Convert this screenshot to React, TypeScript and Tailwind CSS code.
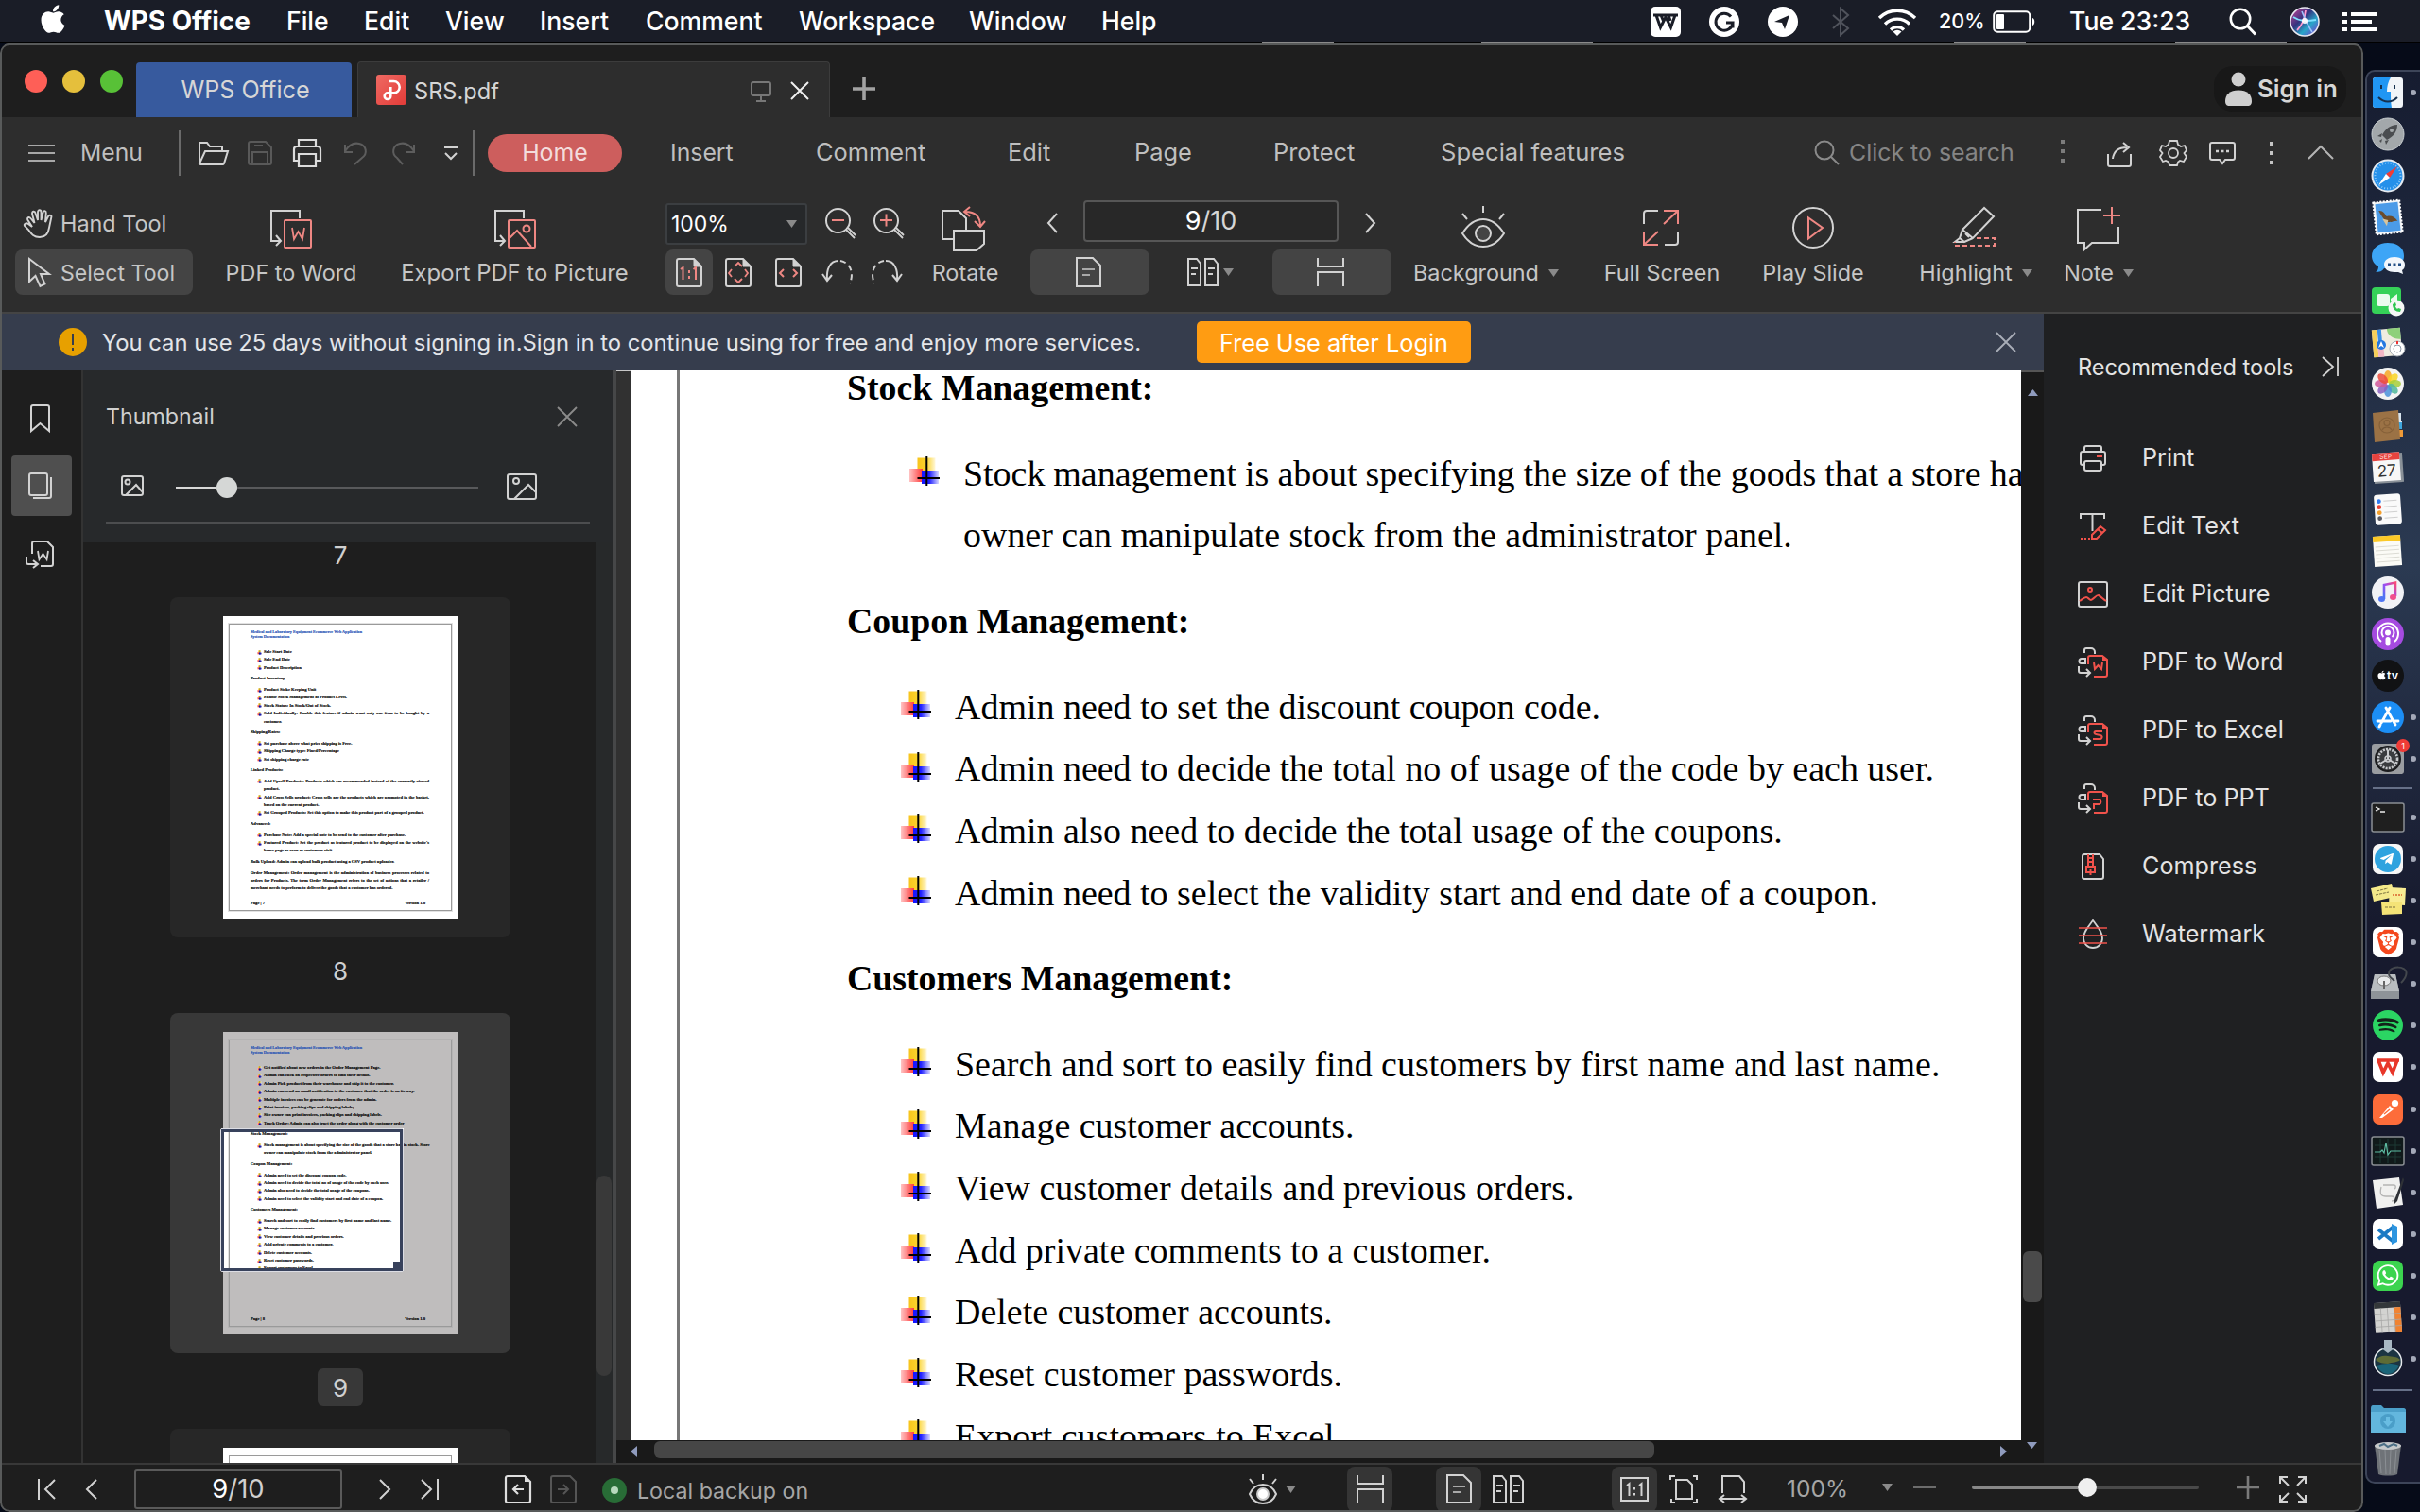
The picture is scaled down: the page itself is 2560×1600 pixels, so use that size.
import type { ReactNode } from "react";
import { FaApple, FaSpotify, FaWhatsapp, FaTelegramPlane } from "react-icons/fa";
import { SiBrave } from "react-icons/si";

type IconProps = { w: number; h: number; children: ReactNode; c?: string; sw?: number };

const LIGHT = "#d2d2d2";
const RED = "#ee8783";
const HOT = "#f0524b";

function Svg({ w, h, children, c = "", sw = 2 }: IconProps) {
  return (
    <svg
      width={w}
      height={h}
      viewBox={`0 0 ${w} ${h}`}
      fill="none"
      stroke={LIGHT}
      strokeWidth={sw}
      className={`block shrink-0 overflow-visible ${c}`}
    >
      {children}
    </svg>
  );
}

function Tri({ c = "" }: { c?: string }) {
  return (
    <Svg w={11} h={8} c={c}>
      <path d="M0 0h11L5.500 8z" fill="#8a8a8a" stroke="none" />
    </Svg>
  );
}

/* ---------- macOS menu bar ---------- */

function MenuBar() {
  return (
    <div className="flex h-11 items-center bg-[#1a1d27] pt-px pl-[42px] text-[26.6px] font-medium whitespace-nowrap text-white">
      <div className="w-[68px]">
        <FaApple className="-ml-[3px] -mt-[6px] size-[34px]" />
      </div>
      <div className="w-[193px] text-[27.8px] font-bold">WPS Office</div>
      <div className="w-[82px]">File</div>
      <div className="w-[86px]">Edit</div>
      <div className="w-[100px]">View</div>
      <div className="w-[112px]">Insert</div>
      <div className="w-[162px]">Comment</div>
      <div className="w-[180px]">Workspace</div>
      <div className="w-[140px]">Window</div>
      <div className="w-[581px]">Help</div>
      <Svg w={32} h={32}>
        <rect width="32" height="32" rx="5" fill="#fff" stroke="none" />
        <path d="M3 9h26M6 9l4.500 13L16 11l5.500 11L26 9M11 9l2.500 6M19 9l2 6" stroke="#1a1d27" strokeWidth="3" />
      </Svg>
      <Svg w={32} h={32} c="ml-[30px]">
        <circle cx="16" cy="16" r="16" fill="#fff" stroke="none" />
        <path d="M23 10.500A9 9 0 1 0 25 17h-7M25 17v5.500" stroke="#1a1d27" strokeWidth="3" />
      </Svg>
      <Svg w={32} h={32} c="ml-[30px]">
        <circle cx="16" cy="16" r="16" fill="#fff" stroke="none" />
        <path d="M7 16 23 9l-5 15-3-7z" fill="#1a1d27" stroke="none" />
      </Svg>
      <Svg w={18} h={30} c="ml-9">
        <path d="M1 8l16 14-8 7V1l8 7L1 22" stroke="#50535c" />
      </Svg>
      <Svg w={42} h={28} c="ml-[30px]">
        <path d="M2 10a27 27 0 0 1 38 0M8 16.500a18.500 18.500 0 0 1 26 0M14 22.500a10 10 0 0 1 14 0" stroke="#fff" strokeWidth="3.400" />
        <path d="M16.500 24.500a7 7 0 0 1 9 0L21 29z" fill="#fff" stroke="none" />
      </Svg>
      <div className="ml-[23px] w-[57px] text-[21.5px]">20%</div>
      <Svg w={46} h={24}>
        <rect x="1.200" y="1.200" width="38" height="21.600" rx="4" stroke="#fff" />
        <rect x="4" y="4" width="8" height="16" rx="1" fill="#fff" stroke="none" />
        <path d="M42 8c3 1 3 7 0 8z" fill="#fff" stroke="none" />
      </Svg>
      <div className="ml-[35px] w-[169px]">Tue 23:23</div>
      <Svg w={30} h={30}>
        <circle cx="12" cy="12" r="10.200" stroke="#fff" strokeWidth="2.600" />
        <path d="m19 19 9 9.500" stroke="#fff" strokeWidth="3" />
      </Svg>
      <Svg w={32} h={32} c="ml-[34px]">
        <defs>
          <linearGradient id="siri" x1="0" y1="0" x2="1" y2="1">
            <stop offset="0" stopColor="#d8479a" />
            <stop offset=".4" stopColor="#33327e" />
            <stop offset=".65" stopColor="#28a6c9" />
            <stop offset="1" stopColor="#8a2bd0" />
          </linearGradient>
        </defs>
        <circle cx="16" cy="16" r="15" fill="url(#siri)" stroke="#e9e9f2" strokeWidth="1.500" />
        <path d="M4 11c6 4 12 5 24 3" stroke="#7fe0ff" strokeWidth="1.800" />
        <path d="M8 25c4-4 8-12 9-21" stroke="#ff9ad0" strokeWidth="1.800" />
        <path d="M24 27c-4-6-7-12-11-22" stroke="#9fc4ff" strokeWidth="1.600" />
        <circle cx="16" cy="15" r="3" fill="#fff" stroke="none" opacity=".9" />
      </Svg>
      <Svg w={36} h={20} c="ml-6">
        <path d="M0 2h5M9 2h27M0 10h5M9 10h22M0 18h5M9 18h27" stroke="#fff" strokeWidth="4" />
      </Svg>
    </div>
  );
}

/* ---------- Title bar with tabs ---------- */

function TitleBar() {
  return (
    <div className="flex h-[76px] items-end bg-[#1e1e1e] text-[#d6d6d6]">
      <div className="mb-[26px] ml-[26px] flex gap-4">
        <div className="size-6 rounded-full bg-[#fe5f57]" />
        <div className="size-6 rounded-full bg-[#e5bf3c]" />
        <div className="size-6 rounded-full bg-[#58c137]" />
      </div>
      <div className="ml-[14px] flex h-[58px] w-[228px] items-center justify-center rounded-t-[4px] bg-[#375a9e] pt-[2px] pl-[3px] text-[25.2px]">
        WPS Office
      </div>
      <div className="ml-[6px] flex h-[59px] w-[500px] items-center rounded-t-[4px] border border-b-0 border-[#3c3c3c] bg-[#2d2d2d] pl-[19px]">
        <Svg w={32} h={32}>
          <defs>
            <linearGradient id="pdf" x1="0" y1="0" x2="1" y2="1">
              <stop stopColor="#ef6a63" />
              <stop offset="1" stopColor="#e23b38" />
            </linearGradient>
          </defs>
          <rect width="32" height="32" rx="3" fill="url(#pdf)" stroke="none" />
          <path d="M14 7h4.500a6.200 6.200 0 0 1 0 12.400H12a3.300 3.300 0 1 0 3.300 3.300V13" stroke="#fff" strokeWidth="2.600" />
        </Svg>
        <span className="mt-[3px] ml-2 w-[355px] text-[23.6px]">SRS.pdf</span>
        <Svg w={22} h={22} c="ml-px mt-[3px]">
          <rect x="1" y="1" width="20" height="14" rx="2" stroke="#777" />
          <path d="M11 15v6M6 21h10" stroke="#777" />
        </Svg>
        <Svg w={20} h={20} c="ml-5 mt-px">
          <path d="m1 1 18 18M19 1 1 19" stroke="#f0f0f0" />
        </Svg>
      </div>
      <Svg w={24} h={24} c="mb-[18px] ml-6">
        <path d="M12 0v24M0 12h24" stroke="#a2a2a2" strokeWidth="3.600" />
      </Svg>
      <div className="mb-[6px] ml-auto mr-[18px] flex h-12 w-[140px] items-center rounded-[20px] bg-[#181818] pl-3 text-[25.9px] font-semibold whitespace-nowrap">
        <Svg w={28} h={36}>
          <circle cx="14" cy="8" r="7.500" fill="#cfcfcf" stroke="none" />
          <path d="M0 31C0 24 5 19.500 14 19.500S28 24 28 31c0 4-2 5-4 5H4c-2 0-4-1-4-5z" fill="#cfcfcf" stroke="none" />
        </Svg>
        <span className="ml-[6px]">Sign in</span>
      </div>
    </div>
  );
}

/* ---------- Ribbon ---------- */

function RibbonTabs() {
  return (
    <div className="flex h-[75px] items-center pl-[30px] text-[25.4px] whitespace-nowrap text-[#bfbfbf]">
      <Svg w={28} h={20}>
        <path d="M0 2h28M0 10h28M0 18h28" stroke="#a8a8a8" strokeWidth="1.800" />
      </Svg>
      <div className="ml-[27px] w-[104px] text-[24.7px]">Menu</div>
      <div className="h-12 w-[2px] bg-[#6a6a6a]" />
      <Svg w={32} h={26} c="ml-[19px]">
        <path d="M1 24V2h8l3 4h13v5M1 24 7 11h24l-4 13a2 2 0 0 1-2 1H2z" />
      </Svg>
      <Svg w={26} h={26} c="ml-[20px]">
        <path d="M3 1h16l6 6v16a2 2 0 0 1-2 2H3a2 2 0 0 1-2-2V3a2 2 0 0 1 2-2zM5 25V12h16v13M7 5h9" stroke="#595959" />
      </Svg>
      <Svg w={30} h={30} c="ml-[22px]">
        <path d="M6 8V1h18v7M7 23H1V11a3 3 0 0 1 3-3h22a3 3 0 0 1 3 3v12h-6M6 16h18v13H6z" stroke="#dcdcdc" strokeWidth="2.200" />
      </Svg>
      <Svg w={24} h={24} c="ml-[24px]">
        <path d="M1 3v8h8M1 10C6 2 12 1 16 2c8 2 9 11 3 15l-8 7" stroke="#5d5d5d" />
      </Svg>
      <Svg w={24} h={24} c="ml-[27px]">
        <path d="M23 3v8h-8M23 10C18 2 12 1 8 2 0 4-1 13 5 17l6 7" stroke="#5d5d5d" />
      </Svg>
      <Svg w={14} h={14} c="ml-[31px]">
        <path d="M0 1h14M1 7l6 6 6-6" />
      </Svg>
      <div className="ml-[16px] h-12 w-[2px] bg-[#6a6a6a]" />
      <div className="ml-[14px] flex h-10 w-[142px] items-center justify-center rounded-full bg-[#cd5e5d] text-[24.9px] text-[#f3dcdc]">
        Home
      </div>
      <div className="ml-[51px] w-[154px] text-[24.8px]">Insert</div>
      <div className="w-[203px]">Comment</div>
      <div className="w-[134px]">Edit</div>
      <div className="w-[147px]">Page</div>
      <div className="w-[177px]">Protect</div>
      <div className="w-[395px] text-[25.6px]">Special features</div>
      <Svg w={27} h={27}>
        <circle cx="11" cy="11" r="9.500" stroke="#8a8a8a" />
        <path d="m18 18 8 8" stroke="#8a8a8a" />
      </Svg>
      <div className="ml-[10px] w-[224px] text-[24.9px] text-[#858585]">Click to search</div>
      <Svg w={4} h={26} c="-mt-[4px]">
        <path d="M2 1v4M2 11v4M2 21v4" stroke="#7c7c7c" strokeWidth="4" />
      </Svg>
      <Svg w={27} h={26} c="ml-[45px] mt-1">
        <path d="M1 12v11a2 2 0 0 0 2 2h20a2 2 0 0 0 2-2V12M6 17c1-8 6-12 15-12M17 0l6 5-6 5" />
      </Svg>
      <Svg w={28} h={28} c="ml-[29px]">
        <path d="M10 1h8l1 4 3 2 4-1 2 5-2.500 3 2.500 4-3 5-4-1-2 1.500-1 3.500h-8l-1-3.500L6 22l-3 1-3-5 2.500-4L0 11l2-5 4 1 3-2z" strokeWidth="1.800" />
        <circle cx="14" cy="14" r="5" strokeWidth="1.800" />
      </Svg>
      <Svg w={28} h={24} c="ml-6">
        <path d="M3 1h22a2 2 0 0 1 2 2v14a2 2 0 0 1-2 2h-8l-3 4-3-4H3a2 2 0 0 1-2-2V3a2 2 0 0 1 2-2z" />
        <path d="M7 10h3M12.500 10h3M18 10h3" strokeWidth="2.600" />
      </Svg>
      <Svg w={4} h={26} c="ml-9">
        <path d="M2 1v4M2 11v4M2 21v4" stroke="#c4c4c4" strokeWidth="4" />
      </Svg>
      <Svg w={28} h={15} c="ml-9">
        <path d="m1 14 13-13 13 13" stroke="#b4b4b4" />
      </Svg>
    </div>
  );
}

function BigTool({ c, icon, label, tri }: { c: string; icon: ReactNode; label: string; tri?: boolean }) {
  return (
    <div className={`flex flex-col items-center whitespace-nowrap ${c}`}>
      <div className="flex h-[52px] items-center justify-center">{icon}</div>
      <div className="flex h-[50px] items-center">
        {label}
        {tri && <Tri c="ml-[10px] mr-[2px]" />}
      </div>
    </div>
  );
}

function ExportIcon({ children }: { children: ReactNode }) {
  return (
    <Svg w={44} h={41} c="mt-[8px]">
      <path d="M31 9V1H1v32h9M6 27l5 6-5 5" />
      <rect x="15" y="11" width="28" height="29" rx="1" stroke={RED} />
      {children}
    </Svg>
  );
}

function SinglePage({ h = 32 }: { h?: number }) {
  return (
    <Svg w={27} h={h}>
      <path d={`M1 1h17l8 8v${h - 10}H1z`} />
      <path d="M7 13h13M7 19h8" stroke="#a9a9a9" />
    </Svg>
  );
}

function DoublePage() {
  return (
    <Svg w={33} h={30}>
      <path d="M1 1h9l4 5v23H1zM19 1h9l4 5v23H19z" />
      <path d="M4 11h7M4 17h5M22 11h7M22 17h5" strokeWidth="1.800" />
    </Svg>
  );
}

function Continuous() {
  return (
    <Svg w={29} h={30}>
      <path d="M1 0v9h27V0M1 30V15h27v15" />
    </Svg>
  );
}

function PageShape({ children }: { children: ReactNode }) {
  return (
    <Svg w={28} h={31}>
      <path d="M3 1h16l8 8v19a2 2 0 0 1-2 2H3a2 2 0 0 1-2-2V3a2 2 0 0 1 2-2z" />
      <path d="m19 1 8 8h-8z" fill={LIGHT} strokeWidth="1" />
      {children}
    </Svg>
  );
}

function Ribbon() {
  return (
    <div className="flex h-[131px] pt-[13px] text-[23.4px] text-[#c6c6c6]">
      <div className="ml-4 flex w-[188px] flex-col gap-1 whitespace-nowrap">
        <div className="flex h-12 items-center pl-[9px]">
          <Svg w={32} h={31}>
            <path
              d="M9 19 4.500 12c-1.500-3 1.500-4 3-2l4 5L9 5c0-3 3-3 3.500-.5L15 12V3.500c0-3 3.500-3 3.500 0V12l2-8c.500-3 3.500-2 3.300.5L23 14l3-6c1.300-2.300 4-1 3.300 1L27 20c-1 7-5 10-10 10-7 0-9-4-12-8l-4-4c-1-2.500 2-3.500 4-2z"
              strokeWidth="1.900"
            />
          </Svg>
          <span className="mt-[2px] ml-[7px]">Hand Tool</span>
        </div>
        <div className="flex h-12 items-center rounded-lg bg-[#444] pl-[13px]">
          <Svg w={26} h={32}>
            <path d="M2 2v24l6.500-6 5 11 5-2.500L14 18h9z" />
          </Svg>
          <span className="mt-[2px] ml-[9px] text-[23.1px]">Select Tool</span>
        </div>
      </div>

      <BigTool
        c="ml-[34px] w-[140px]"
        icon={
          <ExportIcon>
            <path d="m23 19 2 12 4.500-8 4.500 8 2-12" stroke={RED} strokeWidth="1.800" />
          </ExportIcon>
        }
        label="PDF to Word"
      />
      <BigTool
        c="ml-[46px] w-[241px] text-[23.8px]"
        icon={
          <ExportIcon>
            <path d="m16 30 8-8 15 17" stroke={RED} />
            <circle cx="34" cy="20" r="3.500" stroke={RED} />
          </ExportIcon>
        }
        label="Export PDF to Picture"
      />

      <div className="ml-[39px] flex w-[262px] flex-col gap-1">
        <div className="flex h-12 items-center">
          <div className="mt-[2px] flex h-11 w-[150px] items-center rounded-[3px] border-2 border-[#3b3e41] bg-[#26282a] pl-1 text-[23px] text-white">
            <span className="w-[122px]">100%</span>
            <Tri />
          </div>
          <Svg w={34} h={33} c="ml-[19px]">
            <circle cx="13.500" cy="13.500" r="12.500" />
            <path d="M7 13h13" stroke={RED} />
            <path d="m22 23 9 9M24 21l8 8" strokeWidth="1.800" />
          </Svg>
          <Svg w={34} h={33} c="ml-[17px]">
            <circle cx="13.500" cy="13.500" r="12.500" />
            <path d="M7 13h13M13.500 6.500v13" stroke={RED} />
            <path d="m22 23 9 9M24 21l8 8" strokeWidth="1.800" />
          </Svg>
        </div>
        <div className="flex h-12 items-center">
          <div className="flex h-12 w-[50px] items-center justify-center rounded-lg bg-[#444]">
            <PageShape>
              <path d="M5 12l2.500-2v13M18.500 12l2.500-2v13M14 13v3M14 19v3" stroke={RED} />
            </PageShape>
          </div>
          <div className="ml-[13px]">
            <PageShape>
              <path d="m10 9 4-4 4 4M10 22l4 4 4-4M7 12l-3 4 3 4M21 12l3 4-3 4" stroke={RED} strokeWidth="1.800" />
            </PageShape>
          </div>
          <div className="ml-[25px]">
            <PageShape>
              <path d="m9 12-4 4 4 4M19 12l4 4-4 4" stroke={RED} />
            </PageShape>
          </div>
          <Svg w={32} h={26} c="ml-[22px]">
            <path d="M5 21C4 10 8 1 17 1M0 15l5 7 5-6" />
            <path d="M19 1c10 2 15 12 10 24" strokeDasharray="6 4" />
          </Svg>
          <Svg w={32} h={26} c="ml-[20px]">
            <path d="M27 21C28 10 24 1 15 1M32 15l-5 7-5-6" />
            <path d="M13 1C3 3-2 13 3 25" strokeDasharray="6 4" />
          </Svg>
        </div>
      </div>

      <BigTool
        c="ml-[18px] w-[74px]"
        icon={
          <Svg w={46} h={47} c="mt-[8px] mr-[4px]">
            <path d="M12 34H1V4h17l8 8v12M13 25h32v14l-8 7H13z" />
            <path d="M30 0l-6 5 6 5M25 5c10 0 16 5 16 15M35 15l6 6 5-6" stroke={RED} />
          </Svg>
        }
        label="Rotate"
      />

      <div className="ml-[32px] flex w-[382px] flex-col gap-1">
        <div className="flex h-12 items-center">
          <Svg w={12} h={20} c="ml-[17px]">
            <path d="m11 0-9 10 9 10" />
          </Svg>
          <div className="-mt-1 ml-[27px] flex h-11 w-[270px] items-center justify-center rounded-[4px] border-2 border-[#565656] bg-[#282828] text-[27px] text-[#d6d6d6]">
            <span className="text-white">9</span>/10
          </div>
          <Svg w={12} h={20} c="ml-[28px]">
            <path d="m1 0 9 10-9 10" />
          </Svg>
        </div>
        <div className="flex h-12 items-center">
          <div className="flex h-12 w-[126px] items-center justify-center rounded-lg bg-[#444] pr-1">
            <SinglePage />
          </div>
          <div className="ml-10">
            <DoublePage />
          </div>
          <Tri c="ml-[5px]" />
          <div className="ml-auto flex h-12 w-[126px] items-center justify-center rounded-lg bg-[#444] pr-1">
            <Continuous />
          </div>
        </div>
      </div>

      <BigTool
        c="ml-[22px] w-[158px]"
        icon={
          <Svg w={46} h={44} c="mt-[4px] mr-2">
            <path d="M1 29C8 18 15 14 23 14s15 4 22 15c-7 11-14 14-22 14S8 40 1 29zM23 0v7M1 8l5 6M45 8l-5 6" />
            <circle cx="23" cy="29" r="8" fill="#444" />
          </Svg>
        }
        label="Background"
        tri
      />
      <BigTool
        c="ml-[44px] w-[124px]"
        icon={
          <Svg w={38} h={38} c="mt-[6px] mr-[2px]">
            <path d="M1 15V4a3 3 0 0 1 3-3h12M37 23v11a3 3 0 0 1-3 3H23" />
            <path d="M22 1h15v14M37 1 22 15M16 37H1V23M1 37l15-14" stroke={RED} />
          </Svg>
        }
        label="Full Screen"
      />
      <BigTool
        c="ml-[44px] w-[108px]"
        icon={
          <Svg w={44} h={44} c="mt-[6px]">
            <circle cx="22" cy="22" r="21" />
            <path d="M17 11.500v22L32 22z" stroke={RED} />
          </Svg>
        }
        label="Play Slide"
      />
      <BigTool
        c="ml-[58px] w-[122px]"
        icon={
          <Svg w={44} h={42} c="mt-[4px] mr-1">
            <path d="M32 1 9 24l11 9L42 10zM9 24l-3 9 5 4 9-4M6 33l-5 4h10M12 28l4 4" />
            <path d="M24 33h19v8H1v-4" stroke={RED} strokeDasharray="5 3" />
          </Svg>
        }
        label="Highlight"
        tri
      />
      <BigTool
        c="ml-[31px] w-[76px]"
        icon={
          <Svg w={46} h={46} c="mt-[8px] mr-[2px]">
            <path d="M26 3H1v35h7v7l8-7h28V21" />
            <path d="M37 0v18M28 9h18" stroke={RED} />
          </Svg>
        }
        label="Note"
        tri
      />
    </div>
  );
}

/* ---------- Document content ---------- */

type Block = { k: "h" | "b" | "s" | "c" | "j" | "bj"; t: string; gap?: boolean };

const doc: Block[] = [
  { k: "h", t: "Stock Management:" },
  { k: "s", t: "Stock management is about specifying the size of the goods that a store has", gap: true },
  { k: "c", t: "owner can manipulate stock from the administrator panel." },
  { k: "h", t: "Coupon Management:", gap: true },
  { k: "b", t: "Admin need to set the discount coupon code.", gap: true },
  { k: "b", t: "Admin need to decide the total no of usage of the code by each user." },
  { k: "b", t: "Admin also need to decide the total usage of the coupons." },
  { k: "b", t: "Admin need to select the validity start and end date of a coupon." },
  { k: "h", t: "Customers Management:", gap: true },
  { k: "b", t: "Search and sort to easily find customers by first name and last name.", gap: true },
  { k: "b", t: "Manage customer accounts." },
  { k: "b", t: "View customer details and previous orders." },
  { k: "b", t: "Add private comments to a customer." },
  { k: "b", t: "Delete customer accounts." },
  { k: "b", t: "Reset customer passwords." },
  { k: "b", t: "Export customers to Excel." },
];

const page7: Block[] = [
  { k: "b", t: "Sale Start Date" },
  { k: "b", t: "Sale End Date" },
  { k: "b", t: "Product Description" },
  { k: "h", t: "Product Inventory", gap: true },
  { k: "b", t: "Product Stoke Keeping Unit", gap: true },
  { k: "b", t: "Enable Stock Management at Product Level." },
  { k: "b", t: "Stock Status: In Stock/Out of Stock." },
  { k: "bj", t: "Sold Individually: Enable this feature if admin want only one item to be bought by a" },
  { k: "c", t: "customer." },
  { k: "h", t: "Shipping Rates:", gap: true },
  { k: "b", t: "Set purchase above what price shipping is Free.", gap: true },
  { k: "b", t: "Shipping Charge type: Fixed/Percentage" },
  { k: "b", t: "Set shipping charge rate" },
  { k: "h", t: "Linked Products:", gap: true },
  { k: "bj", t: "Add Upsell Products: Products which are recommended instead of the currently viewed", gap: true },
  { k: "c", t: "product." },
  { k: "bj", t: "Add Cross Sells product: Cross sells are the products which are promoted in the basket," },
  { k: "c", t: "based on the current product." },
  { k: "b", t: "Set Grouped Products: Set this option to make this product part of a grouped product." },
  { k: "h", t: "Advanced:", gap: true },
  { k: "b", t: "Purchase Note: Add a special note to be send to the customer after purchase.", gap: true },
  { k: "bj", t: "Featured Product: Set the product as featured product to be displayed on the website's" },
  { k: "c", t: "home page as soon as customers visit." },
  { k: "h", t: "Bulk Upload: Admin can upload bulk product using a CSV product uploader.", gap: true },
  { k: "j", t: "Order Management: Order management is the administration of business processes related to", gap: true },
  { k: "j", t: "orders for Products. The term Order Management refers to the set of actions that a retailer /" },
  { k: "h", t: "merchant needs to perform to deliver the goods that a customer has ordered." },
];

const page8: Block[] = [
  { k: "b", t: "Get notified about new orders in the Order Management Page." },
  { k: "b", t: "Admin can click on respective orders to find their details." },
  { k: "b", t: "Admin Pick product from their warehouse and ship it to the customer." },
  { k: "b", t: "Admin can send an email notification to the customer that the order is on its way." },
  { k: "b", t: "Multiple invoices can be generate for orders from the admin." },
  { k: "b", t: "Print invoices, packing slips and shipping labels;" },
  { k: "b", t: "Site owner can print invoices, packing slips and shipping labels." },
  { k: "b", t: "Track Order: Admin can also tract the order along with the customer order" },
  { ...doc[0], gap: true },
  { k: "bj", t: "Stock management is about specifying the size of the goods that a store has in stock. Store", gap: true },
  ...doc.slice(2),
];

function Bullet({ c = "" }: { c?: string }) {
  return (
    <svg viewBox="0 0 32 31" className={`block shrink-0 ${c}`}>
      <defs>
        <linearGradient id="by">
          <stop offset="0" stopColor="#f8c41c" />
          <stop offset=".5" stopColor="#fbd42e" />
          <stop offset="1" stopColor="#fff8dc" />
        </linearGradient>
        <linearGradient id="br" x1="1" x2="0">
          <stop offset="0" stopColor="#ff3b3b" />
          <stop offset="1" stopColor="#ffc4c4" />
        </linearGradient>
        <linearGradient id="bb">
          <stop offset="0" stopColor="#1414ff" />
          <stop offset=".45" stopColor="#2020ff" />
          <stop offset="1" stopColor="#d8d8ff" />
        </linearGradient>
      </defs>
      <rect x="8.500" y="1.500" width="19" height="15" fill="url(#by)" />
      <rect y="13" width="14" height="14" fill="url(#br)" />
      <rect x="13" y="15" width="18" height="14" fill="url(#bb)" />
      <path d="M18.300 0v31M8.500 23H32" stroke="#000" strokeWidth="2" />
    </svg>
  );
}

function DocLine({ b }: { b: Block }) {
  const gap = b.gap ? "mt-[25px]" : "";
  if (b.k === "h") return <div className={`pl-[180px] text-[37.8px] font-bold ${gap}`}>{b.t}</div>;
  if (b.k === "c") return <div className="pl-[303px]">{b.t}</div>;
  return (
    <div
      className={`flex ${b.k === "s" ? "pl-[246px] tracking-[-0.02px] [word-spacing:-0.45px]" : "pl-[237px]"} ${gap}`}
    >
      <Bullet c={`mt-[14.5px] h-[31px] w-8 ${b.k === "s" ? "mr-[25px]" : "mr-[25px]"}`} />
      {b.t}
    </div>
  );
}

function Document() {
  return (
    <div className="flex h-full w-[1470px] bg-white pl-12">
      <div className="h-full w-[3px] shrink-0 bg-[#777]" />
      <div className="-ml-[3px] mt-[-14.1px] min-w-0 flex-1 overflow-hidden font-['Liberation_Serif',serif] text-[37.96px] leading-[65.65px] whitespace-nowrap text-black">
        {doc.map((b) => (
          <DocLine key={b.t} b={b} />
        ))}
      </div>
    </div>
  );
}

function ThumbLine({ b }: { b: Block }) {
  const gap = b.gap ? "mt-[3.2px]" : "";
  if (b.k === "h") return <div className={gap}>{b.t}</div>;
  if (b.k === "j")
    return <div className={`w-[189px] [text-align-last:justify] ${gap}`}>{b.t}</div>;
  if (b.k === "c") return <div className="pl-[14px]">{b.t}</div>;
  return (
    <div className={`flex pl-[7px] ${gap}`}>
      <Bullet c="mt-[1.5px] mr-[2px] size-[5px]" />
      <span className={b.k === "bj" ? "w-[175px] [text-align-last:justify]" : ""}>{b.t}</span>
    </div>
  );
}

function ThumbPage({ lines, footer }: { lines: Block[]; footer: string }) {
  return (
    <div className="relative m-[6px] mt-2 h-[304px] border border-[#9a9a9a] pl-[22px] pt-[5px] font-['Liberation_Serif',serif] text-[4.61px] leading-[8.4px] font-bold whitespace-nowrap text-black outline outline-[#9a9a9a]/30 [-webkit-text-stroke:0.15px_currentColor]">
      <div className="text-[4.19px] leading-[5px] text-[#2450b4]">
        Medical and Laboratory Equipment Ecommerce Web Application
        <br />
        System Documentation
      </div>
      <div className="h-[276px] overflow-visible pt-[10px]">
        {lines.map((b) => (
          <ThumbLine key={b.t} b={b} />
        ))}
      </div>
      <div className="flex justify-between pr-[27px]">
        <span>{footer}</span>
        <span>Version 1.0</span>
      </div>
    </div>
  );
}

/* ---------- Left side ---------- */

function Rail() {
  return (
    <div className="flex w-[88px] shrink-0 flex-col items-center gap-2 border-r-2 border-[#333] bg-[#1e1e1e] pt-[18px] pl-[2px]">
      <div className="flex size-16 items-center justify-center pr-[3px]">
        <Svg w={21} h={29}>
          <path d="M1 28V3a2 2 0 0 1 2-2h15a2 2 0 0 1 2 2v25l-9.500-8z" />
        </Svg>
      </div>
      <div className="flex size-16 items-center justify-center rounded bg-[#4f4f4f] pr-[3px]">
        <Svg w={25} h={28}>
          <rect x="1" y="1" width="19" height="23" rx="2" />
          <path d="M24 5v20a2 2 0 0 1-2 2H5" />
        </Svg>
      </div>
      <div className="flex size-16 items-center justify-center pr-[5px]">
        <Svg w={30} h={29}>
          <path d="M7 14V3a2 2 0 0 1 2-2h14l6 6v18a2 2 0 0 1-2 2H16M1 17v6a2 2 0 0 0 2 2h9M8 21l5 4-5 4" />
          <path d="m13 11 1.500 9 4-6 4 6L24 11" strokeWidth="1.800" />
        </Svg>
      </div>
    </div>
  );
}

function Thumbnails() {
  return (
    <div className="flex w-[560px] shrink-0 flex-col overflow-hidden bg-[#27292b] text-[23.2px] text-[#d0d0d0]">
      <div className="h-[182px] shrink-0 pr-6 pl-6">
        <div className="flex h-[98px] items-center justify-between pr-[13px]">
          Thumbnail
          <Svg w={22} h={22}>
            <path d="m1 1 20 20M21 1 1 21" stroke="#8b8b8b" strokeWidth="1.800" />
          </Svg>
        </div>
        <div className="flex h-[64px] items-center border-b-2 border-[#4c4d4f] pb-[10px] pl-4">
          <Svg w={24} h={22} c="-mt-1">
            <rect x="1" y="1" width="22" height="20" rx="2" />
            <circle cx="7" cy="7" r="2.500" />
            <path d="m5 21 11-11 7 8" />
          </Svg>
          <div className="ml-[34px] flex w-[320px] items-center">
            <div className="h-[2px] w-[43px] bg-[#d8d8d8]" />
            <div className="size-[22px] rounded-full bg-[#d5d7d6]" />
            <div className="h-[2px] flex-1 bg-[#58595b]" />
          </div>
          <Svg w={32} h={28} c="ml-[30px] -mt-[2px]">
            <rect x="1" y="1" width="30" height="26" rx="2" />
            <circle cx="10" cy="8" r="3" />
            <path d="m8 27 15-15 8 8" />
          </Svg>
        </div>
      </div>
      <div className="flex min-h-0 flex-1">
        <div className="flex w-[542px] flex-col items-center overflow-hidden bg-[#1e1e1e] pl-[2px] text-[26px]">
          <div className="flex h-[58px] w-full shrink-0 items-start justify-center pt-px leading-[26px]">7</div>
          <div className="h-[360px] w-[360px] shrink-0 rounded-lg bg-[#272727] px-14 pt-5">
            <div className="flow-root h-80 bg-white">
              <ThumbPage lines={page7} footer="Page | 7" />
            </div>
          </div>
          <div className="flex h-20 shrink-0 items-center pb-[9px]">8</div>
          <div className="h-[360px] w-[360px] shrink-0 rounded-lg bg-[#383838] px-14 pt-5">
            <div className="relative flow-root h-80 bg-[#bfbdbd]">
              <div className="absolute top-[102px] -left-[2px] h-[151px] w-[193px] bg-white" />
              <ThumbPage lines={page8} footer="Page | 8" />
              <div className="absolute top-[102px] -left-[3px] h-[152px] w-[194px] rounded-[2px] border border-[#dcdde4]">
                <div className="flex h-full items-end justify-end border-[3px] border-[#38425c]">
                  <div className="size-[7px] bg-[#38425c]" />
                </div>
              </div>
            </div>
          </div>
          <div className="mt-4 flex h-10 w-12 shrink-0 items-center justify-center rounded-md bg-[#383838]">9</div>
          <div className="mt-6 h-[60px] w-[360px] shrink-0 rounded-t-lg bg-[#272727] px-14 pt-5">
            <div className="h-10 bg-white px-[6px] pt-2">
              <div className="h-10 border border-[#9a9a9a]" />
            </div>
          </div>
        </div>
        <div className="flex flex-1 flex-col items-center bg-[#27292a]">
          <div className="mt-[670px] h-[212px] w-4 rounded-full bg-[#393939]" />
        </div>
      </div>
    </div>
  );
}

/* ---------- Right side ---------- */

function ConvertIcon({ children }: { children: ReactNode }) {
  return (
    <Svg w={32} h={32}>
      <path d="M7 6V3a2 2 0 0 1 2-2h5a4 4 0 0 1 4 4v2M8 12H4a2.500 2.500 0 0 0 0 5h4v-6M1 20v5a2 2 0 0 0 2 2h10M9 23l4 4-4 4" />
      <path d="M11 18v-7a2 2 0 0 1 2-2h13l5 4v16a2 2 0 0 1-2 2H17" stroke={HOT} />
      <path d="m26 9 5 5h-5z" fill={HOT} stroke="none" />
      {children}
    </Svg>
  );
}

const tools: { label: string; icon: ReactNode }[] = [
  {
    label: "Print",
    icon: (
      <Svg w={28} h={28}>
        <path d="M5 7V3a2 2 0 0 1 2-2h14a2 2 0 0 1 2 2v4M5 21H3a2 2 0 0 1-2-2V9a2 2 0 0 1 2-2h22a2 2 0 0 1 2 2v10a2 2 0 0 1-2 2h-2" />
        <rect x="5" y="17" width="18" height="10" rx="2" />
        <path d="M18 12h6" stroke={HOT} />
      </Svg>
    ),
  },
  {
    label: "Edit Text",
    icon: (
      <Svg w={28} h={28}>
        <path d="M1 6V1h25v5M13.500 1v18" />
        <path d="M1 27h2M5 27h2M9 27h2M13 27v-4l9-9 5 4-9 9zM19 17l5 4" stroke={HOT} />
      </Svg>
    ),
  },
  {
    label: "Edit Picture",
    icon: (
      <Svg w={32} h={28}>
        <rect x="1" y="1" width="30" height="26" rx="2" />
        <circle cx="13" cy="9" r="2" stroke={HOT} />
        <path d="M2 21c3-2 5-4 7-4s3 3 5 3 6-6 8-5 5 4 8 6" stroke={HOT} />
      </Svg>
    ),
  },
  {
    label: "PDF to Word",
    icon: (
      <ConvertIcon>
        <path d="m17 16 1 7 3.500-4 3.500 4 1-7" stroke={HOT} />
      </ConvertIcon>
    ),
  },
  {
    label: "PDF to Excel",
    icon: (
      <ConvertIcon>
        <path d="M26 17h-7a1.500 1.500 0 0 0-1.500 1.500c0 3 8 1 8 4A2 2 0 0 1 24 25h-8" stroke={HOT} />
      </ConvertIcon>
    ),
  },
  {
    label: "PDF to PPT",
    icon: (
      <ConvertIcon>
        <path d="M16 17h7a3 3 0 0 1 0 5h-6v5" stroke={HOT} />
      </ConvertIcon>
    ),
  },
  {
    label: "Compress",
    icon: (
      <Svg w={24} h={28}>
        <path d="M3 1h16l4 5v19a2 2 0 0 1-2 2H3a2 2 0 0 1-2-2V3a2 2 0 0 1 2-2z" />
        <path d="M7 1v12M12 1v12M7 5h5M7 9h5M5 14h9v6H5zM9.500 17v6" stroke={HOT} />
      </Svg>
    ),
  },
  {
    label: "Watermark",
    icon: (
      <Svg w={30} h={32}>
        <path d="M15 1c5 7 10 12 10 19a10 10 0 0 1-20 0C5 13 10 8 15 1z" strokeWidth="1.800" />
        <path d="M0 9h30M0 17h30M0 25h30" stroke={HOT} strokeWidth="1.600" />
      </Svg>
    ),
  },
];

function ToolsPanel() {
  return (
    <div className="w-[338px] shrink-0 bg-[#1f2022] pl-9 whitespace-nowrap text-[#e4e4e4]">
      <div className="flex h-[114px] items-center text-[23.6px]">
        <span className="w-[258px]">Recommended tools</span>
        <Svg w={18} h={22} c="-mt-[3px]">
          <path d="m1 1 11 10L1 21M17 1v20" strokeWidth="1.800" />
        </Svg>
      </div>
      <div className="mt-[3px] text-[25.2px]">
        {tools.map((t) => (
          <div key={t.label} className="flex h-[72px] items-center">
            <div className="flex w-8 justify-center">{t.icon}</div>
            <span className="ml-9">{t.label}</span>
          </div>
        ))}
      </div>
    </div>
  );
}

/* ---------- Status bar ---------- */

function StatusBar() {
  return (
    <div className="flex h-[50px] items-center bg-[#1e1e1e] pt-px text-[#d0d0d0]">
      <Svg w={19} h={22} c="ml-10">
        <path d="M1 0v22M18 1 8 11l10 10" />
      </Svg>
      <Svg w={12} h={22} c="ml-[32px]">
        <path d="M11 1 1 11l10 10" />
      </Svg>
      <div className="ml-[39px] flex h-[42px] w-[220px] items-center justify-center rounded-[3px] border-2 border-[#5a5a5a] pt-px text-[27.4px]">
        <span className="text-white">9</span>/10
      </div>
      <Svg w={12} h={22} c="ml-[39px]">
        <path d="m1 1 10 10L1 21" />
      </Svg>
      <Svg w={19} h={22} c="ml-[32px]">
        <path d="M18 0v22M1 1l10 10L1 21" />
      </Svg>
      <Svg w={28} h={30} c="ml-[70px]">
        <path d="M3 1h18l6 6v20a2 2 0 0 1-2 2H3a2 2 0 0 1-2-2V3a2 2 0 0 1 2-2zM20 15H9M14 10l-5 5 5 5" stroke="#dedede" strokeWidth="2.200" />
        <path d="m21 1 6 6h-6z" fill="#dedede" stroke="none" />
      </Svg>
      <Svg w={28} h={30} c="ml-5">
        <path d="M3 1h18l6 6v20a2 2 0 0 1-2 2H3a2 2 0 0 1-2-2V3a2 2 0 0 1 2-2zM8 15h11M14 10l5 5-5 5" stroke="#555" />
      </Svg>
      <div className="mt-[3px] ml-[27px] flex size-[26px] items-center justify-center rounded-full bg-[#286c36]">
        <div className="size-2 rounded-full bg-[#b8d8bd]" />
      </div>
      <span className="mt-[5px] ml-[11px] w-[647px] text-[23.2px] whitespace-nowrap text-[#a6a6a6]">Local backup on</span>
      <Svg w={30} h={32}>
        <path d="M1 21c3-7 8-10 14-10s11 3 14 10c-3 7-8 10-14 10S4 28 1 21zM15 0v6M1 5l4 5M29 5l-4 5" />
        <circle cx="15" cy="21" r="6" fill="#fff" stroke="#ccc" />
      </Svg>
      <Tri c="ml-[9px]" />
      <div className="ml-[54px] flex h-12 w-12 items-center justify-center rounded-lg bg-[#353535]">
        <Continuous />
      </div>
      <div className="ml-[46px] flex h-12 w-12 items-center justify-center rounded-lg bg-[#353535]">
        <SinglePage h={31} />
      </div>
      <div className="ml-3">
        <DoublePage />
      </div>
      <div className="ml-[93px] flex h-12 w-12 items-center justify-center rounded-lg bg-[#353535]">
        <Svg w={30} h={26}>
          <rect x="1" y="1" width="28" height="24" />
          <path d="M7 9l2.500-2v13M20 9l2.500-2v13M15 11v2.500M15 17v2.500" />
        </Svg>
      </div>
      <Svg w={29} h={30} c="ml-[14px]">
        <path d="M0 5V1h5M24 1h4v4M28 25v4h-4M5 29H1v-4M6 5h12l5 5v15H6z" />
      </Svg>
      <Svg w={30} h={30} c="ml-[22px]">
        <path d="M4 19V1h18l5 6v12M1 25h28M6 21l-5 4 5 4M24 21l5 4-5 4" />
      </Svg>
      <span className="ml-[42px] w-[101px] text-[24.5px] text-[#a6a6a6]">100%</span>
      <Tri c="-mt-1" />
      <div className="-mt-1 ml-[22px] h-[3px] w-6 bg-[#6c6c6c]" />
      <div className="-mt-1 ml-[38px] flex w-[240px] items-center">
        <div className="h-1 w-[112px] rounded-l bg-[#888]" />
        <div className="size-[20px] rounded-full bg-[#efefef]" />
        <div className="h-1 flex-1 rounded-r bg-[#4a4a4a]" />
      </div>
      <Svg w={24} h={24} c="-mt-1 ml-10">
        <path d="M12 0v24M0 12h24" stroke="#7a7a7a" strokeWidth="2.600" />
      </Svg>
      <Svg w={29} h={28} c="ml-[21px]">
        <path d="M1 8V1h8M1 1l9 9M20 1h8v7M28 1l-9 9M1 20v7h8M1 27l9-9M28 20v7h-8M28 27l-9-9" />
      </Svg>
    </div>
  );
}

/* ---------- Dock ---------- */

function D({ children }: { children: ReactNode }) {
  return (
    <svg width="36" height="36" viewBox="0 0 36 36" fill="none" className="block overflow-visible">
      {children}
    </svg>
  );
}

const petals = ["#f6a623", "#f9d423", "#a6ce39", "#4fb79a", "#4a90d9", "#8a5fc0", "#d0579a", "#ec4b3c"];

const dockTop: { id: string; dot?: boolean; icon: ReactNode }[] = [
  {
    id: "finder",
    dot: true,
    icon: (
      <D>
        <rect x="2" y="2" width="32" height="32" rx="3" fill="#f1f4f8" />
        <path d="M5 2h16c-3 5-4 10-4 15h4c0 6 0 12 1 17H5a3 3 0 0 1-3-3V5a3 3 0 0 1 3-3z" fill="#2196f3" />
        <path d="M11 10v4M25 10v4M8 23c6 6 14 6 20 0" stroke="#16304e" strokeWidth="2" />
      </D>
    ),
  },
  {
    id: "launchpad",
    icon: (
      <D>
        <circle cx="18" cy="18" r="17" fill="#a3a8ab" stroke="#c9ced1" />
        <path d="M28 8c-8 0-13 5-16 11l5 5c6-3 11-8 11-16zM12 17l-5 3 4 1M19 24l-3 5-1-4M9 25l3-2-1 4z" fill="#4a4d50" />
        <circle cx="22" cy="14" r="2" fill="#a3a8ab" />
      </D>
    ),
  },
  {
    id: "safari",
    icon: (
      <D>
        <circle cx="18" cy="18" r="16.500" fill="#2590ea" stroke="#e5eaf0" strokeWidth="2" />
        <circle cx="18" cy="18" r="13.500" stroke="#8cc8f8" strokeDasharray="1 2" strokeWidth="2" />
        <path d="M28 8 20 20l-4-4z" fill="#f23b35" />
        <path d="M8 28l8-12 4 4z" fill="#fff" />
      </D>
    ),
  },
  {
    id: "mail",
    icon: (
      <D>
        <g transform="rotate(-6 18 18)">
          <rect x="4" y="1" width="28" height="34" fill="#eef2f5" stroke="#fff" strokeDasharray="2 1.500" strokeWidth="2" />
          <rect x="6" y="3" width="24" height="30" fill="#4b9be8" />
          <path d="M9 10c5 0 6 4 8 7 4-1 8 1 11 6-4-1-6 1-8 0-5 1-7-4-11-13z" fill="#6b4b2b" />
          <path d="M12 19l6 2-2 6z" fill="#d9c49b" />
        </g>
      </D>
    ),
  },
  {
    id: "messages",
    icon: (
      <D>
        <path d="M18 1C8 1 1 7 1 15c0 5 3 9 7 11 0 3-1 5-3 6 4 0 7-1 9-4 12 1 21-4 21-13S28 1 18 1z" fill="#3da5f6" />
        <path d="M25 16c-6 0-11 3-11 8s5 8 11 8h4l5 2-1-4c2-1 3-3 3-6 0-5-5-8-11-8z" fill="#f2f6fb" />
        <path d="M18 24h3M23.500 24h3M29 24h3" stroke="#224f86" strokeWidth="3" />
      </D>
    ),
  },
  {
    id: "facetime",
    icon: (
      <D>
        <rect x="1" y="4" width="31" height="28" rx="4" fill="#35d158" />
        <rect x="6" y="11" width="14" height="13" rx="3" fill="#eafbee" />
        <path d="M21 16l7-5v12l-7-4z" fill="#eafbee" />
        <circle cx="27" cy="26" r="8.500" fill="#f5f7f6" />
        <path d="M23 22c0 5 3 8 8 8l1-3-3-1-1 1c-1-1-2-2-2-3l1-1-1-3z" fill="#2fc651" />
      </D>
    ),
  },
  {
    id: "maps",
    icon: (
      <D>
        <g transform="rotate(-5 18 18)">
          <rect x="2" y="4" width="30" height="29" fill="#f0ece0" />
          <path d="M18 4h14v12c-8 0-14-5-14-12z" fill="#8ed07a" />
          <path d="M2 4h5v29H2z" fill="#f6cf5a" />
          <path d="M7 20h6v13H7z" fill="#f2b7c4" />
          <path d="M10 4v14" stroke="#3a8ee6" strokeWidth="4" />
        </g>
        <circle cx="11" cy="21" r="5" fill="#2378e0" />
        <path d="M11 17l3 7-3-2-3 2z" fill="#fff" />
        <circle cx="28" cy="25" r="8" fill="#fff" stroke="#a7adb5" />
        <circle cx="28" cy="25" r="4" stroke="#8d98a5" />
        <path d="M28 17v3" stroke="#e33" strokeWidth="2" />
      </D>
    ),
  },
  {
    id: "photos",
    icon: (
      <D>
        <circle cx="18" cy="18" r="17" fill="#f3f3f3" />
        {petals.map((p, i) => (
          <ellipse key={p} cx="18" cy="10.500" rx="4" ry="6.500" fill={p} opacity=".85" transform={`rotate(${i * 45} 18 18)`} />
        ))}
      </D>
    ),
  },
  {
    id: "contacts",
    icon: (
      <D>
        <path d="M28 4h4v8h-4zM29 12h4v8h-4z" fill="#d8e4ee" />
        <path d="M29 14h4v7h-4z" fill="#3fa6dd" />
        <path d="M30 22h4v7h-4z" fill="#f09b38" />
        <path d="M2 4l27-3 2 31-27 3z" fill="#9b7245" />
        <circle cx="17" cy="17" r="8" stroke="#866139" strokeWidth="1.200" />
        <circle cx="17" cy="14.500" r="3" stroke="#866139" strokeWidth="1.200" />
        <path d="M12 22c2-4 8-4 10 0" stroke="#866139" strokeWidth="1.200" />
      </D>
    ),
  },
  {
    id: "calendar",
    icon: (
      <D>
        <g transform="rotate(-4 18 18)">
          <rect x="3" y="3" width="31" height="31" fill="#8a9198" />
          <rect x="2" y="2" width="29" height="30" fill="#f7f7f7" />
          <rect x="2" y="2" width="29" height="8" fill="#e6433f" />
          <text x="16.500" y="8.500" textAnchor="middle" fontSize="7" fill="#ffd9d6" fontFamily="Inter">SEP</text>
          <text x="16.500" y="27" textAnchor="middle" fontSize="17" fill="#333" fontFamily="Inter">27</text>
        </g>
      </D>
    ),
  },
  {
    id: "reminders",
    icon: (
      <D>
        <g transform="rotate(-4 18 18)">
          <rect x="4" y="2" width="28" height="32" rx="3" fill="#fafafa" />
          <path d="M14 9h14M14 15h14M14 21h14M14 27h14" stroke="#cfcfcf" />
          <circle cx="9" cy="9" r="2.400" fill="#2f7bf0" />
          <circle cx="9" cy="15" r="2.400" fill="#ea4335" />
          <circle cx="9" cy="21" r="2.400" fill="#f5a02c" />
          <circle cx="9" cy="27" r="2.400" fill="#5b5b63" />
        </g>
      </D>
    ),
  },
  {
    id: "notes",
    icon: (
      <D>
        <g transform="rotate(-4 18 18)">
          <rect x="3" y="2" width="29" height="32" fill="#fbfbf6" />
          <rect x="3" y="2" width="29" height="6" fill="#fbc928" />
          <path d="M5 13h25M5 17h25M5 21h25M5 25h25M5 29h25" stroke="#dcdcd4" />
        </g>
      </D>
    ),
  },
  {
    id: "music",
    icon: (
      <D>
        <defs>
          <linearGradient id="mus" x1="0" y1="1" x2="1" y2="0">
            <stop stopColor="#3f7bf5" />
            <stop offset=".5" stopColor="#a24bf0" />
            <stop offset="1" stopColor="#fa4a72" />
          </linearGradient>
        </defs>
        <circle cx="18" cy="18" r="17" fill="#f1f2f6" />
        <path d="M14 25V10l12-2.500V22" stroke="url(#mus)" strokeWidth="2.600" />
        <ellipse cx="11.500" cy="25" rx="3.500" ry="3" fill="#4f75f3" />
        <ellipse cx="23.500" cy="23" rx="3.500" ry="3" fill="#f0508c" />
      </D>
    ),
  },
  {
    id: "podcasts",
    icon: (
      <D>
        <circle cx="18" cy="18" r="17" fill="#a54be0" />
        <path d="M11 26a11 11 0 1 1 14 0M13.500 21a6.500 6.500 0 1 1 9 0" stroke="#fff" strokeWidth="2" />
        <circle cx="18" cy="16.500" r="3" fill="#fff" />
        <rect x="15.500" y="21" width="5" height="9.500" rx="2.500" fill="#fff" />
      </D>
    ),
  },
  {
    id: "tv",
    icon: (
      <D>
        <circle cx="18" cy="18" r="17" fill="#111214" />
        <g transform="translate(6 12)" fill="#fff">
          <FaApple size={11} color="#fff" />
        </g>
        <text x="17" y="22" fontSize="12.500" fontWeight="600" fill="#fff" fontFamily="Inter">tv</text>
      </D>
    ),
  },
  {
    id: "appstore",
    dot: true,
    icon: (
      <D>
        <circle cx="18" cy="18" r="17" fill="#1c8ef5" />
        <path d="M20 8 11 24M16 8l10 18M7 22h14M24 22h5M9 28l1-2" stroke="#fff" strokeWidth="2.800" strokeLinecap="round" />
      </D>
    ),
  },
  {
    id: "settings",
    dot: true,
    icon: (
      <D>
        <rect x="1" y="2" width="34" height="32" rx="3" fill="#9a9da1" />
        <circle cx="18" cy="18" r="13" fill="#3a3c3f" stroke="#1b1c1e" strokeWidth="2" />
        <circle cx="18" cy="18" r="10" stroke="#c9cbce" strokeWidth="2.600" strokeDasharray="2 1.200" />
        <path d="M18 18V8.500M18 18l-8 5M18 18l8 5" stroke="#c9cbce" strokeWidth="2" />
        <circle cx="18" cy="18" r="3" stroke="#c9cbce" strokeWidth="1.500" />
        <circle cx="34" cy="4" r="7" fill="#f03b37" />
        <text x="34" y="7.500" textAnchor="middle" fontSize="9" fill="#fff" fontFamily="Inter">1</text>
      </D>
    ),
  },
];

const dockMid: { id: string; icon: ReactNode }[] = [
  {
    id: "terminal",
    icon: (
      <D>
        <rect x="1" y="3" width="34" height="30" rx="2" fill="#1f1f1f" stroke="#8b8f94" strokeWidth="1.500" />
        <path d="m5 7 4 2-4 2M10 12h5" stroke="#eee" strokeWidth="1.300" />
      </D>
    ),
  },
  {
    id: "telegram",
    icon: (
      <D>
        <rect x="2" y="2" width="32" height="32" rx="7" fill="#f6f6f6" />
        <circle cx="18" cy="18" r="14" fill="#2fa3df" />
        <g transform="translate(9 10)">
          <FaTelegramPlane size={16} color="#fff" />
        </g>
      </D>
    ),
  },
  {
    id: "stickies",
    icon: (
      <D>
        <path d="M0 5l22-5 3 14-22 5z" fill="#f4e98a" />
        <path d="M20 4l17 1-1 18-17-1z" fill="#f8ec93" />
        <path d="M11 20l22-1v13l-21 1z" fill="#f4e377" />
        <path d="M6 8l12-3M5 12l14-3M15 25h12" stroke="#7a7140" strokeDasharray="3 1" />
        <path d="M23 12h10" stroke="#d9622e" strokeWidth="1.500" strokeDasharray="2 1" />
      </D>
    ),
  },
  {
    id: "brave",
    icon: (
      <D>
        <rect x="2" y="2" width="32" height="32" rx="7" fill="#fff" />
        <g transform="translate(5 4.500)">
          <SiBrave size={27} color="#f4481e" />
        </g>
      </D>
    ),
  },
  {
    id: "diskutility",
    icon: (
      <D>
        <path d="M4 8h22l4 18v8H0v-8z" fill="#8e9398" />
        <path d="M4 8h22l4 18H0z" fill="#b9bdc0" />
        <ellipse cx="14" cy="15" rx="7" ry="5" fill="#e8eaeb" stroke="#777" />
        <path d="M14 15v9" stroke="#666" strokeWidth="2" />
        <path d="M20 4c5-5 14-4 17 0 2 5-1 9-5 13M20 4c-3 6 2 8 5 11" stroke="#43474d" strokeWidth="2" />
      </D>
    ),
  },
  {
    id: "spotify",
    icon: (
      <D>
        <circle cx="18" cy="18" r="14" fill="#12231a" />
        <g transform="translate(1.500 1.500)">
          <FaSpotify size={33} color="#2bd563" />
        </g>
      </D>
    ),
  },
  {
    id: "wps",
    icon: (
      <D>
        <rect x="2" y="2" width="32" height="32" rx="7" fill="#fff" />
        <path d="M6 11h24M8 11l5 13 5-10 5 10 5-13" stroke="#e8372a" strokeWidth="3.600" />
      </D>
    ),
  },
  {
    id: "postman",
    icon: (
      <D>
        <rect x="2" y="2" width="32" height="32" rx="7" fill="#fd6c3a" />
        <path d="M9 27 20 14l4 4-12 9z" fill="#fff" />
        <circle cx="25.500" cy="11.500" r="3.600" fill="#fff" />
        <path d="m14 23 6-5" stroke="#fd6c3a" strokeWidth="1.500" />
      </D>
    ),
  },
  {
    id: "activity",
    icon: (
      <D>
        <rect x="1" y="3" width="34" height="30" rx="2" fill="#10191a" stroke="#8b8f94" strokeWidth="1.500" />
        <path d="M4 12h28M4 24h28M10 5v26M18 5v26M26 5v26" stroke="#1c3b35" />
        <path d="M4 19h6l2-2 2 3 2-11 2 13 3-4h11" stroke="#5dbda3" strokeWidth="1.200" />
      </D>
    ),
  },
  {
    id: "script",
    icon: (
      <D>
        <path d="M2 5l28-3 4 29-28 4z" fill="#f0f0ef" />
        <path d="M13 10h11c3 0 3 4 0 4M11 12c-2 8 0 10 5 10h6c4 0 4 5 0 5" stroke="#b4b4b4" strokeWidth="1.300" />
        <path d="M34 2 25 26l-1 5 4-4 7-22z" fill="#2f3237" />
      </D>
    ),
  },
  {
    id: "vscode",
    icon: (
      <D>
        <rect x="2" y="2" width="32" height="32" rx="7" fill="#fff" />
        <path d="M8 13l16 13M8 23 24 10" stroke="#1b7ac4" strokeWidth="3.600" />
        <path d="M22 7l6 3v16l-6 3z" fill="#2d95e0" />
      </D>
    ),
  },
  {
    id: "whatsapp",
    icon: (
      <D>
        <rect x="2" y="2" width="32" height="32" rx="7" fill="#3bd44f" />
        <g transform="translate(5 4.500)">
          <FaWhatsapp size={26} color="#fff" />
        </g>
      </D>
    ),
  },
  {
    id: "calculator",
    icon: (
      <D>
        <g transform="rotate(-4 18 18)">
          <rect x="4" y="2" width="28" height="32" rx="1" fill="#d3d3d1" />
          <rect x="4" y="2" width="28" height="6" fill="#33373a" />
          <rect x="25" y="8" width="7" height="26" fill="#f08332" />
          <path d="M4 14.500h28M4 21h28M4 27.500h28M11 8v26M18 8v26M25 8v26" stroke="#a8a8a6" strokeWidth=".8" />
        </g>
      </D>
    ),
  },
  {
    id: "installer",
    icon: (
      <D>
        <circle cx="18" cy="21" r="14.500" fill="#1b3442" stroke="#e5e9ec" strokeWidth="1.500" />
        <path d="M5 19c4-4 8-5 13-4s9 0 13 4c-3 3-8 2-13 4-5 0-9-1-13-4z" fill="#5d6b35" />
        <path d="M6 25c6-2 17-3 24 0-3 6-8 9-12 9s-9-3-12-9z" fill="#1a6478" />
        <path d="M14 -2h8v8h4l-8 6-8-6h4z" fill="#a9b8c4" />
      </D>
    ),
  },
];

function Dock() {
  return (
    <div className="mt-[28px] flex h-[1496px] w-[58px] flex-col rounded-l-[10px] border-2 border-r-0 border-[#3d4559] bg-linear-to-b from-[#161c30] via-[#2b3a52] via-35% to-[#171a2e] to-60%">
      {dockTop.map((a) => (
        <div key={a.id} className="flex h-[44.07px] shrink-0 items-center pl-1">
          {a.icon}
          {a.dot && <div className="ml-[6px] size-[6px] rounded-full bg-[#a4a9b8]" />}
        </div>
      ))}
      <div className="mt-[8px] mb-[8px] ml-[6px] h-[2px] w-[42px] shrink-0 bg-[#667088]" />
      {dockMid.map((a) => (
        <div key={a.id} className="flex h-[44.07px] shrink-0 items-center pl-1">
          {a.icon}
          <div className="ml-[6px] size-[6px] rounded-full bg-[#a4a9b8]" />
        </div>
      ))}
      <div className="mt-[10px] mb-[9px] ml-[6px] h-[2px] w-[42px] shrink-0 bg-[#667088]" />
      <div className="flex h-[42px] shrink-0 items-center pl-1">
        <D>
          <path d="M0 6c0-2 1-3 2-3h9l3 3h21c1 0 2 1 2 2v24H0z" fill="#4b9fc9" />
          <path d="M0 10h37v22H0z" fill="#63b7de" />
          <circle cx="18" cy="20" r="8" fill="#4a9ec8" />
          <path d="M16 15h4v5h3l-5 6-5-6h3z" fill="#69bde3" />
        </D>
      </div>
      <div className="flex h-[42px] shrink-0 items-center pl-1">
        <D>
          <path d="M4 3h28l-4 31c-5 2-15 2-20 0z" fill="#6f7378" />
          <path d="M9 8l2 25M15 8l1 26M21 8l-1 26M27 8l-2 25" stroke="#8b8f94" />
          <ellipse cx="18" cy="4" rx="14" ry="4" fill="#c6c9cb" />
          <path d="M9 4l5-2 4 3 6-3 4 2" stroke="#4c6f86" strokeWidth="2" />
        </D>
      </div>
    </div>
  );
}

/* ---------- App ---------- */

export default function App() {
  return (
    <div className="flex h-[1600px] w-[2560px] flex-col overflow-hidden bg-[#060b18] font-[Inter,sans-serif]">
      <MenuBar />
      <div className="flex h-[2px] bg-black">
        <div className="ml-[1335px] h-px w-[76px] bg-[#8a8a8a]" />
        <div className="ml-[156px] h-px w-[118px] bg-[#8a8a8a]" />
        <div className="ml-[382px] h-px w-[76px] bg-[#8a8a8a]" />
        <div className="ml-[158px] h-px w-[118px] bg-[#8a8a8a]" />
      </div>
      <div className="flex min-h-0 flex-1">
        <div className="relative flex h-[1554px] w-[2500px] shrink-0 flex-col overflow-hidden rounded-[10px] bg-[#1e1e1e]">
          <div className="h-[2px] shrink-0 bg-[#6a6c6c]" />
          <TitleBar />
          <div className="h-[208px] shrink-0 border-b-2 border-[#444] bg-[#2d2d2d]">
            <RibbonTabs />
            <Ribbon />
          </div>
          <div className="flex h-[1216px] shrink-0">
            <div className="flex w-[2162px] shrink-0 flex-col">
              <div className="flex h-[60px] shrink-0 items-center bg-[#363d4d] pl-[62px] whitespace-nowrap text-[#e3e5e9]">
                <Svg w={30} h={30}>
                  <circle cx="15" cy="15" r="15" fill="#e7a000" stroke="none" />
                  <path d="M15 6v12M15 21v3" stroke="#363d4d" />
                </Svg>
                <span className="mt-[2px] ml-4 w-[1158px] text-[23.78px]">
                  You can use 25 days without signing in.Sign in to continue using for free and enjoy more services.
                </span>
                <div className="flex h-11 w-[290px] items-center justify-center rounded-[5px] bg-[#ff9c12] pt-px text-[25.3px] text-white">
                  Free Use after Login
                </div>
                <Svg w={20} h={20} c="ml-[556px]">
                  <path d="m0 0 20 20M20 0 0 20" stroke="#a9aeb8" strokeWidth="1.800" />
                </Svg>
              </div>
              <div className="flex h-[1156px]">
                <Rail />
                <Thumbnails />
                <div className="w-[4px] shrink-0 bg-[#464748]" />
                <div className="flex flex-1 flex-col bg-[#191919]">
                  <div className="flex h-[1132px] overflow-hidden">
                    <div className="w-4 shrink-0 border-t border-[#c8c8c8] bg-[#313131]" />
                    <Document />
                    <div className="flex h-full w-6 flex-col items-center border-t-2 border-[#555] bg-[#191919] pt-[18px]">
                      <Svg w={11} h={7}>
                        <path d="M0 7h11L5.500 0z" fill="#8f9bbd" stroke="none" />
                      </Svg>
                      <div className="mt-[905px] h-[54px] w-5 rounded-[6px] bg-[#4a4a4a]" />
                    </div>
                  </div>
                  <div className="flex h-6 items-center">
                    <Svg w={7} h={12} c="ml-[15px]">
                      <path d="M7 0v12L0 6z" fill="#8f9bbd" stroke="none" />
                    </Svg>
                    <div className="-mt-1 ml-[18px] h-[18px] w-[1058px] rounded-[6px] bg-[#464646]" />
                    <Svg w={7} h={12} c="ml-[366px]">
                      <path d="M0 0v12l7-6z" fill="#8f9bbd" stroke="none" />
                    </Svg>
                    <Svg w={11} h={7} c="-mt-[13px] ml-[21px]">
                      <path d="M0 0h11L5.500 7z" fill="#8f9bbd" stroke="none" />
                    </Svg>
                  </div>
                </div>
              </div>
            </div>
            <ToolsPanel />
          </div>
          <div className="h-[2px] shrink-0 bg-[#383838]" />
          <StatusBar />
          <div className="pointer-events-none absolute inset-0 rounded-[10px] border-2 border-[#585a5a]" />
        </div>
        <div className="ml-[2px]">
          <Dock />
        </div>
      </div>
    </div>
  );
}
